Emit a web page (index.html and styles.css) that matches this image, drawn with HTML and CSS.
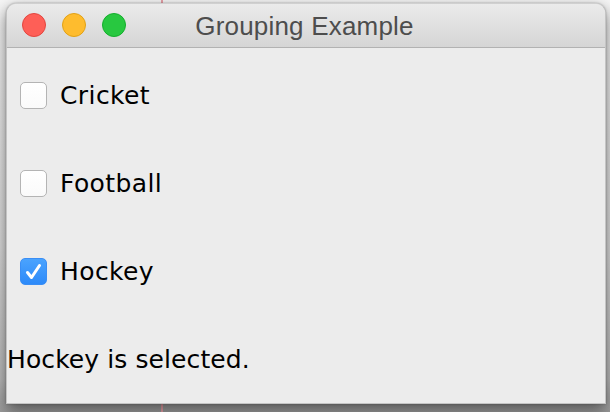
FILE: index.html
```html
<!DOCTYPE html>
<html>
<head>
<meta charset="utf-8">
<link rel="stylesheet" href="styles.css">
</head>
<body>
<div class="desk">
  <div class="guide"></div>
  <div class="window">
    <div class="titlebar">
      <div class="lights">
        <span class="light red"></span>
        <span class="light yellow"></span>
        <span class="light green"></span>
      </div>
      <div class="title">Grouping Example</div>
    </div>
    <div class="content">
      <label class="row"><span class="box"></span><span class="label">Cricket</span></label>
      <label class="row"><span class="box"></span><span class="label">Football</span></label>
      <label class="row"><span class="box checked"><svg viewBox="0 0 27 27" width="27" height="27"><path d="M7.5 14.5 L11.5 19.5 L19.5 7.5" fill="none" stroke="#fff" stroke-width="3" stroke-linecap="round" stroke-linejoin="round"/></svg></span><span class="label">Hockey</span></label>
      <div class="row status">Hockey is selected.</div>
    </div>
  </div>
</div>
</body>
</html>
```
FILE: styles.css
```css
html, body {
  margin: 0;
  padding: 0;
  width: 610px;
  height: 412px;
  overflow: hidden;
}
body {
  background: linear-gradient(#f6f6f6 0%, #dcdcdc 60%, #bcbcbc 92%, #9c9c9c 100%);
}
.desk {
  position: relative;
  width: 610px;
  height: 412px;
  box-sizing: border-box;
  padding: 3px 4px 0 6px;
}
.guide {
  position: absolute;
  left: 161px;
  top: 0;
  width: 2px;
  height: 412px;
  background: #e8a0a8;
}
.window {
  position: relative;
  width: 600px;
  height: 401px;
  box-sizing: border-box;
  border: 1px solid #c4c4c4;
  border-top-color: #d0d0d0;
  border-radius: 10px 10px 0 0;
  background: #ececec;
  box-shadow: 0 6px 16px rgba(0,0,0,0.5), 0 0 2px rgba(0,0,0,0.3);
  display: flex;
  flex-direction: column;
  overflow: hidden;
}
.titlebar {
  position: relative;
  height: 43px;
  flex: none;
  background: linear-gradient(#ebebeb, #d5d5d5);
  border-bottom: 1px solid #b2b2b2;
  display: flex;
  align-items: center;
  justify-content: center;
}
.lights {
  position: absolute;
  left: 15px;
  top: 9px;
  display: flex;
  gap: 16px;
}
.light {
  width: 24px;
  height: 24px;
  border-radius: 50%;
  box-sizing: border-box;
}
.red { background: #fe5f57; border: 1px solid #e2463f; }
.yellow { background: #febc2e; border: 1px solid #e1a116; }
.green { background: #28c840; border: 1px solid #14ae2c; }
.title {
  font-family: "Liberation Sans", Arial, sans-serif;
  font-size: 26px;
  letter-spacing: 0.2px;
  color: #4d4d4d;
  margin-top: 2px;
  margin-right: 3px;
}
.content {
  padding-top: 3px;
  display: flex;
  flex-direction: column;
  font-family: "DejaVu Sans", sans-serif;
  font-size: 25px;
  color: #000;
}
.row {
  height: 88px;
  display: flex;
  align-items: center;
  padding-left: 13px;
}
.label {
  letter-spacing: 0.4px;
}
.box {
  width: 27px;
  height: 27px;
  box-sizing: border-box;
  border: 1px solid #b4b4b4;
  border-radius: 5px;
  background: linear-gradient(#ffffff, #fafafa);
  margin-right: 13px;
  flex: none;
}
.box.checked {
  border: 1px solid #3a8ef5;
  background: linear-gradient(#4aa3fe, #2d8af9);
}
.box svg {
  display: block;
  margin: -1px;
}
.status {
  padding-left: 0;
  letter-spacing: 0.1px;
}
```
